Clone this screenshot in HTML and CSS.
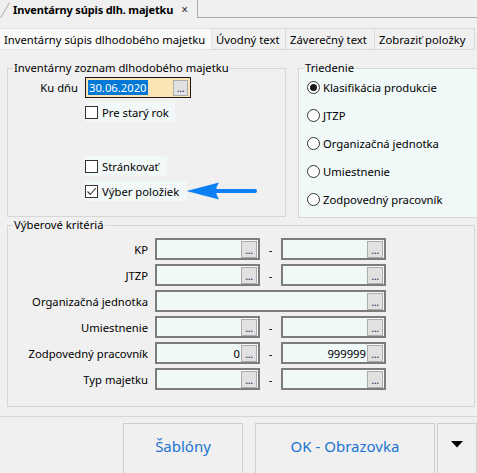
FILE: index.html
```html
<!DOCTYPE html>
<html lang="sk">
<head>
<meta charset="utf-8">
<link rel="stylesheet" href="styles.css">
</head>
<body>
<div class="doc-strip">
  <svg class="doc-slant" width="10" height="18" viewBox="0 0 10 18"><path d="M0.5 18 L9.5 2.5" stroke="#a8a8a8" fill="none"/></svg>
  <div class="doc-tab"><span class="doc-title">Inventárny súpis dlh. majetku</span><span class="doc-close">×</span></div>
  <div class="doc-fill"></div>
</div>
<div class="tabs">
  <div class="tab active t1">Inventárny súpis dlhodobého majetku</div>
  <div class="tab t2">Úvodný text</div>
  <div class="tab t3">Záverečný text</div>
  <div class="tab t4">Zobraziť položky</div>
</div>
<div class="content">
  <div class="top-row">
    <fieldset class="group g1">
      <legend>Inventárny zoznam dlhodobého majetku</legend>
      <div class="date-row">
        <span class="lbl-date">Ku dňu</span>
        <div class="date-input"><span class="sel">30.06.2020</span><span class="dots">...</span></div>
      </div>
      <div class="chk-row r1"><span class="chk"></span><span class="chk-lbl">Pre starý rok</span></div>
      <div class="chk-row r2"><span class="chk"></span><span class="chk-lbl">Stránkovať</span></div>
      <div class="chk-row r3"><span class="chk checked"><svg width="11" height="11" viewBox="0 0 11 11"><path d="M1.5 5.5 L4.3 8.5 L9.8 2" stroke="#333" stroke-width="1.1" fill="none"/></svg></span><span class="chk-lbl">Výber položiek</span>
        <svg class="arrow" width="72" height="22" viewBox="0 0 72 22"><path d="M0.5 11 L33 2.5 Q27 11 33 19.5 Z" fill="#0c7ff2"/><path d="M30 11 L69 11" stroke="#0c7ff2" stroke-width="4" stroke-linecap="round"/></svg>
      </div>
    </fieldset>
    <fieldset class="group g2">
      <legend>Triedenie</legend>
      <div class="radio-row first"><span class="radio on"></span>Klasifikácia produkcie</div>
      <div class="radio-row"><span class="radio"></span>JTZP</div>
      <div class="radio-row"><span class="radio"></span>Organizačná jednotka</div>
      <div class="radio-row"><span class="radio"></span>Umiestnenie</div>
      <div class="radio-row"><span class="radio"></span>Zodpovedný pracovník</div>
    </fieldset>
  </div>
  <fieldset class="group g3">
    <legend>Výberové kritériá</legend>
    <div class="crit">
      <span class="clbl">KP</span>
      <div class="inp"><span class="val"></span><span class="dots">...</span></div>
      <span class="dash">-</span>
      <div class="inp"><span class="val"></span><span class="dots">...</span></div>

      <span class="clbl">JTZP</span>
      <div class="inp"><span class="val"></span><span class="dots">...</span></div>
      <span class="dash">-</span>
      <div class="inp"><span class="val"></span><span class="dots">...</span></div>

      <span class="clbl">Organizačná jednotka</span>
      <div class="inp wide"><span class="val"></span><span class="dots">...</span></div>

      <span class="clbl">Umiestnenie</span>
      <div class="inp"><span class="val"></span><span class="dots">...</span></div>
      <span class="dash">-</span>
      <div class="inp"><span class="val"></span><span class="dots">...</span></div>

      <span class="clbl">Zodpovedný pracovník</span>
      <div class="inp"><span class="val">0</span><span class="dots">...</span></div>
      <span class="dash">-</span>
      <div class="inp"><span class="val">999999</span><span class="dots">...</span></div>

      <span class="clbl">Typ majetku</span>
      <div class="inp"><span class="val"></span><span class="dots">...</span></div>
      <span class="dash">-</span>
      <div class="inp"><span class="val"></span><span class="dots">...</span></div>
    </div>
  </fieldset>
</div>
<div class="footer">
  <button class="btn sablony">Šablóny</button>
  <div class="split">
    <button class="btn ok">OK - Obrazovka</button>
    <button class="btn drop"><svg width="12" height="7" viewBox="0 0 12 7"><path d="M0 0 L12 0 L6 6.5 Z" fill="#000"/></svg></button>
  </div>
</div>
</body>
</html>
```
FILE: styles.css
```css
* { box-sizing: border-box; }
html, body { margin: 0; padding: 0; }
body {
  width: 477px;
  height: 473px;
  overflow: hidden;
  background: #f0f0f0;
  font-family: "Noto Sans", "Open Sans", sans-serif;
  font-size: 11.25px;
  color: #000;
}

/* document tab strip */
.doc-strip { display: flex; height: 18px; align-items: stretch; }
.doc-slant { flex: none; display: block; }
.doc-tab {
  display: flex; align-items: center;
  width: 188px; flex: none;
  padding: 0 0 0 3px;
  border-right: 1px solid #a8a8a8;
  height: 18px;
  white-space: nowrap;
}
.doc-title { font-weight: bold; font-size: 11px; letter-spacing: -0.15px; white-space: nowrap; }
.doc-close { margin-left: 8px; font-size: 12px; color: #333; }
.doc-fill { flex: 1; border-bottom: 1px solid #a8a8a8; }

/* sheet tabs */
.tabs { display: flex; margin-top: 10px; height: 22px; }
.tab {
  display: flex; align-items: center;
  padding: 0 0 0 4px;
  border: 1px solid #d9d9d9;
  border-left: none;
  background: #f0f0f0;
  white-space: nowrap;
  flex: none;
}
.tab.active { background: #fafafa; border-color: #e3e3e3; }
.t1 { width: 212px; }
.t2 { width: 74px; }
.t3 { width: 89px; }
.t4 { width: 100px; }

/* content */
.content { padding: 11px 2px 0 7px; }
.top-row { display: flex; gap: 12px; height: 156px; }
.group {
  margin: 0; padding: 0;
  border: 1px solid #d6d6d6;
  min-width: 0;
}
.group legend { padding: 0 1px; margin-left: 5px; line-height: 14px; }
.g1 { width: 279px; flex: none; height: 156px; }
.g2 { flex: none; width: 200px; height: 157px; background: #f0f8f8; }

.date-row { display: flex; align-items: center; margin-top: 2px; height: 21px; }
.lbl-date { width: 70px; text-align: right; }
.date-input {
  margin-left: 7px;
  width: 106px; height: 21px;
  background: #fbe5b5;
  border: 1px solid #1a1a1a;
  display: flex; align-items: center; justify-content: space-between;
  padding: 0 2px 0 2px;
}
.sel { background: #0078d7; color: #fff; padding: 0 1px; line-height: 15px; }
.date-input .dots { width: 15px; height: 16px; }

.dots {
  display: flex; align-items: flex-end; justify-content: center;
  width: 16px; height: 17px;
  background: #e1e1e1;
  border: 1px solid #adadad;
  font-size: 11px; line-height: 11px;
  color: #2a2a5a;
  padding-bottom: 2px;
  letter-spacing: -0.5px;
}

.chk-row {
  display: flex; align-items: center;
  margin-left: 77px; height: 20px;
  position: relative;
  background: #f2f8f8;
}
.r1 { margin-top: 4px; width: 90px; }
.r2 { margin-top: 34px; width: 82px; }
.r3 { margin-top: 5px; width: 102px; }
.chk {
  width: 13px; height: 13px;
  border: 1px solid #333;
  background: #fff;
  flex: none;
  display: flex; align-items: center; justify-content: center;
}
.chk-lbl { padding-left: 4px; }
.arrow { position: absolute; left: 101px; top: -1px; }

.radio-row { display: flex; align-items: center; height: 20px; margin-left: 8px; margin-bottom: 8px; }
.radio-row.first { margin-top: 2px; }
.radio {
  width: 13px; height: 13px; border-radius: 50%;
  border: 1px solid #333; background: #fff;
  margin-right: 3px; flex: none;
  display: flex; align-items: center; justify-content: center;
}
.radio.on::after { content: ""; width: 7px; height: 7px; border-radius: 50%; background: #1a1a1a; }

.g3 { margin-top: 1px; width: 468px; height: 189px; }
.crit {
  display: grid;
  grid-template-columns: 147px 105px 21px 105px;
  row-gap: 4px;
  margin-top: 6px;
}
.clbl { padding-right: 7px; height: 22px; display: flex; align-items: center; justify-content: flex-end; white-space: nowrap; }
.inp {
  width: 105px; height: 22px;
  border: 2px solid #7c7c7c;
  background: #f0f8f8;
  display: flex; align-items: center; justify-content: flex-end;
  padding-right: 1px;
}
.inp.wide { grid-column: 2 / 5; width: 231px; }
.val { padding-right: 1px; }
.dash { height: 22px; display: flex; align-items: center; justify-content: center; }

.footer {
  margin-top: 9px;
  border-top: 1px solid #d6d6d6;
  display: flex;
  padding: 6px 0 0 123px;
  gap: 12px;
}
.btn {
  font-family: "Noto Sans", "Open Sans", sans-serif;
  font-size: 15px;
  color: #1c74d0;
  background: #f0f0f0;
  border: 1px solid #cfcfcf;
  height: 52px;
  padding: 0 0 6px 0;
}
.sablony { width: 120px; }
.split { display: flex; gap: 2px; }
.ok { width: 180px; }
.drop { width: 40px; display: flex; align-items: center; justify-content: center; padding-bottom: 10px; }
```
